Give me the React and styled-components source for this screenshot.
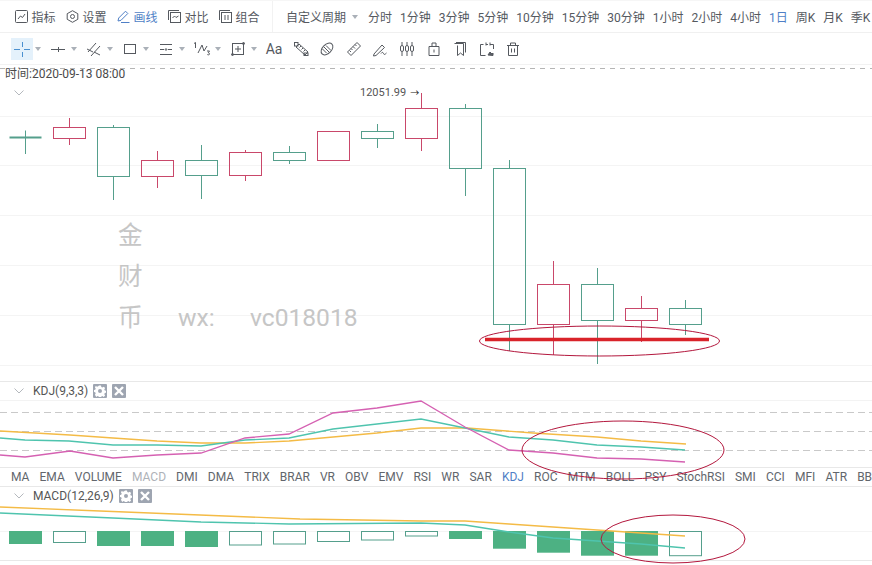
import React from 'react';
import styled, { createGlobalStyle } from 'styled-components';

const FONT = `Roboto, "Noto Sans CJK SC", "Noto Sans", sans-serif`;
const BLUE = '#4f7fc6';
const TEXT = '#55595f';

const Global = createGlobalStyle`
  html, body { margin: 0; padding: 0; background: #fff; overflow: hidden; }
  body { font-family: ${FONT}; font-size: 12px; color: ${TEXT}; }
`;

const Page = styled.div`
  position: relative;
  width: 872px;
  height: 565px;
  overflow: hidden;
  background: #fff;
`;

const TopBar = styled.div`
  display: flex;
  align-items: center;
  height: 31px;
  padding-left: 15px;
  border-top: 1px solid #f6f6f6;
  border-bottom: 1px solid #f0f0f0;
  white-space: nowrap;
`;
const MenuGroup = styled.div`
  display: flex;
  gap: 10px;
  padding-right: 12px;
  border-right: 1px solid #f2f2f2;
  height: 100%;
  align-items: center;
`;
const MenuItem = styled.div`
  display: flex;
  align-items: center;
  gap: 3.5px;
  width: 41px;
  color: ${p => (p.$active ? BLUE : TEXT)};
`;
const PeriodGroup = styled.div`
  display: flex;
  align-items: center;
  gap: 8px;
  margin-left: 13px;
`;
const Period = styled.span`
  color: ${p => (p.$active ? BLUE : TEXT)};
`;
const PeriodMenu = styled.span`
  display: flex;
  align-items: center;
  gap: 6px;
  margin-right: 2px;
`;
const Caret = styled.i`
  display: block;
  width: 0;
  height: 0;
  border-left: 3.5px solid transparent;
  border-right: 3.5px solid transparent;
  border-top: 4px solid #aab0b8;
`;
const DrawBar = styled.div`
  display: flex;
  align-items: center;
  height: 31px;
  padding-left: 11px;
  gap: 4px;
  border-bottom: 1px solid #f2f2f2;
`;
const DrawGroup = styled.div`
  display: flex;
  align-items: center;
`;
const DrawSlot = styled.div`
  width: 22px;
  height: 22px;
  display: flex;
  align-items: center;
  justify-content: center;
  background: ${p => (p.$active ? '#e4f1fb' : 'transparent')};
`;
const CaretSlot = styled.div`
  width: 10px;
  display: flex;
  justify-content: center;
`;
const PlainTools = styled.div`
  display: flex;
  align-items: center;
  gap: 4.6px;
`;
const AaLabel = styled.span`
  font-size: 14px;
  color: ${TEXT};
`;
const Glyph = styled.svg`
  display: block;
  flex: none;
  fill: none;
  stroke: ${p => p.$color || TEXT};
  stroke-width: 1;
`;

const MainPane = styled.div`
  position: relative;
  height: 316px;
`;
const Chart = styled.svg`
  display: block;
  width: 872px;
  height: ${p => p.$h}px;
`;
const TimeLabel = styled.div`
  position: absolute;
  left: 5px;
  top: 2px;
  line-height: 14px;
  color: #4a4a4a;
`;
const Chevron = styled.svg`
  display: block;
  flex: none;
  fill: none;
  stroke: #b4b8bd;
  stroke-width: 1;
`;
const MainChevron = styled.div`
  position: absolute;
  left: 13px;
  top: 24px;
`;
const PriceTag = styled.div`
  position: absolute;
  left: 360px;
  top: 21px;
  font-size: 11px;
  line-height: 14px;
  color: #555;
  display: flex;
  align-items: center;
  gap: 4px;
`;
const PriceArrow = styled.span`
  font-size: 9px;
  color: #222;
`;
const Watermark = styled.div`
  position: absolute;
  left: 118px;
  top: 150px;
  display: grid;
  grid-template-columns: 60px 72px auto;
  grid-auto-rows: 41px;
  align-items: center;
  font-size: 24.6px;
  color: #c6c6c6;
  line-height: 41px;
  white-space: nowrap;
`;
const WmRow = styled.div`
  grid-column: 1 / -1;
  display: grid;
  grid-template-columns: subgrid;
`;
const PaneHeader = styled.div`
  display: flex;
  align-items: center;
  height: ${p => p.$h}px;
  box-sizing: border-box;
  padding-left: 13px;
  border-top: ${p => (p.$top ? '1px solid #e8e8e8' : 'none')};
  color: #555;
`;
const HeaderTitle = styled.span`
  margin-left: 8px;
  margin-right: 5px;
`;
const HeaderBtn = styled.span`
  width: 14px;
  height: 14px;
  margin-right: 5px;
  background: #9ea5b1;
  border-radius: 1px;
  display: flex;
  align-items: center;
  justify-content: center;
`;
const Tabs = styled.div`
  display: flex;
  align-items: center;
  gap: 10.1px;
  height: 18px;
  padding-left: 11px;
  border-top: 1px solid #e8e8e8;
  border-bottom: 1px solid #e8e8e8;
  white-space: nowrap;
  overflow: hidden;
`;
const Tab = styled.span`
  color: ${p => (p.$active ? BLUE : p.$muted ? '#aeb2b8' : '#62666c')};
`;
const PaneFooter = styled.div`
  border-top: 1px solid #e8e8e8;
`;
const Overlay = styled.svg`
  position: absolute;
  left: 0;
  top: 0;
  width: 872px;
  height: 565px;
  fill: none;
  stroke: #b3173d;
  stroke-width: 1;
  pointer-events: none;
`;

const GREEN = '#559f8c';
const RED = '#c9486a';
const centers = Array.from({ length: 16 }, (_, i) => 25 + i * 44);

const candles = [
  { o: 137.5, c: 137.5, h: 130.5, l: 154, col: GREEN, doji: true },
  { o: 127.5, c: 138.5, h: 118, l: 145, col: RED },
  { o: 127.5, c: 176.5, h: 125, l: 200, col: GREEN },
  { o: 160.5, c: 176.5, h: 151, l: 188, col: RED },
  { o: 160.5, c: 175.5, h: 145, l: 199, col: GREEN },
  { o: 152.5, c: 175.5, h: 150, l: 181, col: RED },
  { o: 152.5, c: 160.5, h: 146, l: 164, col: GREEN },
  { o: 131.5, c: 160.5, h: 131.5, l: 160.5, col: RED },
  { o: 131.5, c: 138.5, h: 124, l: 148, col: GREEN },
  { o: 108.5, c: 138.5, h: 93, l: 151, col: RED },
  { o: 108.5, c: 168.5, h: 104, l: 196, col: GREEN },
  { o: 168.5, c: 324.5, h: 160, l: 351, col: GREEN },
  { o: 284.5, c: 324.5, h: 261, l: 355, col: RED },
  { o: 284.5, c: 320.5, h: 268, l: 364, col: GREEN },
  { o: 308.5, c: 320.5, h: 296, l: 342, col: RED },
  { o: 308.5, c: 324.5, h: 300, l: 335, col: GREEN },
];

const kdjYellow = '0,431 70,435 113,438 157,441 201,443 245,443 289,441 333,437 377,433 421,428 467,428 533,433 597,437 641,441 686,444';
const kdjTeal = '0,438 25,440 69,441 113,445 157,445 201,446 245,440 289,438 333,429 377,424 421,419 465,428 509,437 553,440 597,445 641,447 685,450';
const kdjPink = '0,455 25,457 70,451 113,458 157,455 201,453 245,438 289,434 333,413 377,408 421,401 465,427 509,450 553,453 597,458 641,459 685,462';
const macdYellow = '0,507 100,511 200,515 300,519 421,521 465,521 509,524 553,527 597,530 641,533 685,536';
const macdTeal = '0,513 113,518 201,522 289,524 421,523 465,525 509,532 553,538 597,541 641,544 685,548';

const macdBars = [
  [544, 1], [542.5, 0], [546, 1], [546, 1], [547, 1], [545, 0], [544, 0], [541.5, 0],
  [540, 0], [536, 0], [539, 1], [548.7, 1], [552.7, 1], [555.7, 1], [555.7, 1], [555.7, 0],
];

const periods = ['分时', '1分钟', '3分钟', '5分钟', '10分钟', '15分钟', '30分钟', '1小时', '2小时', '4小时', '1日', '周K', '月K', '季K'];
const tabs = ['MA', 'EMA', 'VOLUME', 'MACD', 'DMI', 'DMA', 'TRIX', 'BRAR', 'VR', 'OBV', 'EMV', 'RSI', 'WR', 'SAR', 'KDJ', 'ROC', 'MTM', 'BOLL', 'PSY', 'StochRSI', 'SMI', 'CCI', 'MFI', 'ATR', 'BBW'];

const G = ({ size = 16, color, children }) => (
  <Glyph width={size} height={size} viewBox={`0 0 ${size} ${size}`} $color={color}>{children}</Glyph>
);

const drawIcons = [
  <G color="#4a90d0"><path d="M0 8.500h6M10 8.500h6M8.500 1v5M8.500 11v5" /></G>,
  <G><path d="M1 8.500h14M8.500 6v5" /></G>,
  <G><path d="M2 11 10 2M5 15l9-10M1 8l6 3M8 11l6 3" /></G>,
  <G size={14}><rect x="1.500" y="2.500" width="11" height="9" /></G>,
  <G><path d="M2 3.500h12M2 8.500h4M10 8.500h4M2 13.500h12" /><circle cx="8" cy="8.500" r="0.800" /></G>,
  <G size={18}><path d="M1 3.500 2.500 2.500V8M5 13 9 5l2 6 3-5M14 11h2.500l-1.300 1.800c1.100 0 1.500.6 1.300 1.400-.2.800-1.500.8-2.200.3" /></G>,
  <G><rect x="2.500" y="2.500" width="11" height="11" /><path d="M8 5v6M5 8h6" /><circle cx="13.500" cy="2.500" r="1" fill="#5a5f66" /><circle cx="2.500" cy="13.500" r="1" fill="#5a5f66" /></G>,
];

const plainIcons = [
  <G><path d="M3 6 6 3l9 8-3 3zM8 5 6.500 6.500M10 7 8.500 8.500M12 9l-1.500 1.500" /><rect x="1.500" y="1.500" width="3.500" height="3.500" /><rect x="11" y="12" width="4" height="2.500" /></G>,
  <G><ellipse cx="8" cy="8" rx="7" ry="4.500" transform="rotate(-45 8 8)" /><path d="M5 6l5 5M7 4.500l5 5M3.500 8l4 4" /></G>,
  <G><path d="M11 1.500 14.500 5 5 14.500 1.500 11zM9 3.500 10.500 5M7 5.500 9 7.500M5 7.500 6.500 9M3.500 9.500 5 11" /></G>,
  <G><path d="M2 13 10 4l2.500 2.500L4 14.500l-2.500.5zM9 12.500c1-1.500 2-1.500 2.500 0s1.500 1 3-.5" /></G>,
  <G><path d="M3 1v3M3 11v4M8 1v3M8 11v4M13 1v3M13 11v4" /><rect x="1.500" y="4.500" width="3" height="6" rx="1.500" /><rect x="6.500" y="4.500" width="3" height="6" rx="1.500" /><rect x="11.500" y="4.500" width="3" height="6" rx="1.500" /></G>,
  <G><path d="M3 5.500h10v9H3zM6 5.500V2h4v3.500" /><path d="M8 8.500v3" /></G>,
  <G><path d="M2.500 2.500h9v12l-3-2.500-3 2.500V4.500M4 1.500h9.500v10" /></G>,
  <G><path d="M1.500 3.500h3M7 3.500h2M11 3.500h3.500V8M1.500 3.500v11h5M7 1.500v3M11 1.500v3" /><path d="M9 14l2-3 2 2 1-1v2.500z" fill="#5a5f66" /></G>,
  <G><path d="M2 4.500h12M5.500 4.500v-2.500h5v2.500M3.500 4.500v10h9v-10M6.500 7.500v4M9.500 7.500v4" /></G>,
];

const ChevronIcon = () => (
  <Chevron width="12" height="8" viewBox="0 0 12 8"><path d="M1.500 1.500 6 6l4.500-4.500" /></Chevron>
);

const Candle = ({ x, o, c, h, l, col, doji }) => (
  <g stroke={col} fill="none">
    {doji ? (
      <>
        <path d={`M${x + 0.5} ${h}V${l}`} />
        <path d={`M${x - 15.5} ${o}H${x + 16.5}`} strokeWidth="2" />
      </>
    ) : (
      <>
        <rect x={x - 15.5} y={o} width="32" height={c - o} />
        {h < o && <path d={`M${x + 0.5} ${h}V${o}`} />}
        {l > c && <path d={`M${x + 0.5} ${c}V${l}`} />}
      </>
    )}
  </g>
);

const Gear = () => (
  <svg width="12" height="12" viewBox="0 0 12 12">
    <path fill="#fff" fillRule="evenodd" d="M5 .5h2l.3 1.500 1.100.5 1.300-.8 1.400 1.400-.8 1.300.5 1.100 1.500.3v2l-1.500.3-.5 1.100.8 1.300-1.400 1.400-1.300-.8-1.100.5-.3 1.500H5l-.3-1.500-1.100-.5-1.300.8L.9 9.700l.8-1.300-.5-1.100L-.3 7V5l1.500-.3.5-1.100-.8-1.300L1.800.9l1.300.8 1.100-.5zM6 4a2 2 0 1 0 0 4 2 2 0 0 0 0-4z" />
  </svg>
);
const Cross = () => (
  <svg width="10" height="10" viewBox="0 0 10 10"><path d="M1 1l8 8M9 1 1 9" stroke="#fff" strokeWidth="2.400" /></svg>
);

const Header = ({ title, h, top }) => (
  <PaneHeader $h={h} $top={top}>
    <ChevronIcon />
    <HeaderTitle>{title}</HeaderTitle>
    <HeaderBtn><Gear /></HeaderBtn>
    <HeaderBtn><Cross /></HeaderBtn>
  </PaneHeader>
);

const Line = ({ pts, color }) => <polyline points={pts} fill="none" stroke={color} strokeWidth="1.300" />;

export default function App() {
  return (
    <Page>
      <Global />
      <TopBar>
        <MenuGroup>
          <MenuItem>
            <G size={13}><rect x="0.500" y="0.500" width="12" height="12" rx="1" /><path d="M3 9l2.500-3 2 1.500L10 4" /></G>
            指标
          </MenuItem>
          <MenuItem>
            <G size={13}><path d="M6.500.700l5.300 3v5.600l-5.300 3-5.300-3V3.700z" /><circle cx="6.500" cy="6.500" r="2" /></G>
            设置
          </MenuItem>
          <MenuItem $active>
            <G size={13} color={BLUE}><path d="M1 11l.700-3L8.500 1.200l2.300 2.300L4 10.300zM4 12.500h8.500" /></G>
            画线
          </MenuItem>
          <MenuItem>
            <G size={13}><path d="M.500 10V.500H11" /><rect x="2.500" y="2.500" width="10" height="10" /><path d="M4.500 8l2-2 1.500 1.500L10.500 6" /></G>
            对比
          </MenuItem>
          <MenuItem>
            <G size={13}><path d="M.500 10V.500H11" /><rect x="2.500" y="2.500" width="10" height="10" /><path d="M6 5v5M9 5v5" /></G>
            组合
          </MenuItem>
        </MenuGroup>
        <PeriodGroup>
          <PeriodMenu>自定义周期<Caret /></PeriodMenu>
          {periods.map(p => <Period key={p} $active={p === '1日'}>{p}</Period>)}
        </PeriodGroup>
      </TopBar>

      <DrawBar>
        {drawIcons.map((icon, i) => (
          <DrawGroup key={i}>
            <DrawSlot $active={i === 0}>{icon}</DrawSlot>
            <CaretSlot><Caret /></CaretSlot>
          </DrawGroup>
        ))}
        <PlainTools>
          <DrawSlot><AaLabel>Aa</AaLabel></DrawSlot>
          {plainIcons.map((icon, i) => <DrawSlot key={i}>{icon}</DrawSlot>)}
        </PlainTools>
      </DrawBar>

      <MainPane>
        <Chart $h={316} viewBox="0 65 872 316">
          {[116.5, 165.5, 215.5, 265.5, 315.5, 365.5].map(y => (
            <path key={y} d={`M0 ${y}H872`} stroke="#f4f4f4" />
          ))}
          <path d="M0 68.500H872" stroke="#b5b5b5" strokeDasharray="5 5" />
          {candles.map((c, i) => <Candle key={i} x={centers[i]} {...c} />)}
          <path d="M485 339.500H709" stroke="#d9232a" strokeWidth="3.500" />
        </Chart>
        <TimeLabel>时间:2020-09-13 08:00</TimeLabel>
        <MainChevron><ChevronIcon /></MainChevron>
        <PriceTag>12051.99 <PriceArrow>→</PriceArrow></PriceTag>
        <Watermark>
          <WmRow><span>金</span></WmRow>
          <WmRow><span>财</span></WmRow>
          <WmRow><span>币</span><span>wx:</span><span>vc018018</span></WmRow>
        </Watermark>
      </MainPane>

      <Header title="KDJ(9,3,3)" h={19} top />
      <Chart $h={67} viewBox="0 400 872 67">
        <path d="M0 400.500H872" stroke="#f3f3f3" />
        {[412.5, 431.5, 450.5].map(y => (
          <path key={y} d={`M0 ${y}H872`} stroke="#c9c9c9" strokeDasharray="7 4" />
        ))}
        <Line pts={kdjYellow} color="#f4bb46" />
        <Line pts={kdjTeal} color="#4fc4ae" />
        <Line pts={kdjPink} color="#d561b2" />
      </Chart>

      <Tabs>
        {tabs.map(t => <Tab key={t} $active={t === 'KDJ'} $muted={t === 'MACD'}>{t}</Tab>)}
      </Tabs>

      <Header title="MACD(12,26,9)" h={18} />
      <Chart $h={55} viewBox="0 505 872 55">
        <path d="M0 531.500H872" stroke="#f4f4f4" />
        {macdBars.map(([b, filled], i) => (
          filled
            ? <rect key={i} x={centers[i] - 16} y="531" width="33" height={b - 531} fill="#4db183" />
            : <rect key={i} x={centers[i] - 15.5} y="531.500" width="32" height={b - 531.5} fill="#fff" stroke={GREEN} />
        ))}
        <Line pts={macdYellow} color="#f4bb46" />
        <Line pts={macdTeal} color="#4fc4ae" />
      </Chart>
      <PaneFooter />

      <Overlay viewBox="0 0 872 565">
        <ellipse cx="599.500" cy="341" rx="120" ry="15" />
        <ellipse cx="623" cy="450" rx="101" ry="29" />
        <ellipse cx="673" cy="539" rx="72" ry="24" />
      </Overlay>
    </Page>
  );
}
